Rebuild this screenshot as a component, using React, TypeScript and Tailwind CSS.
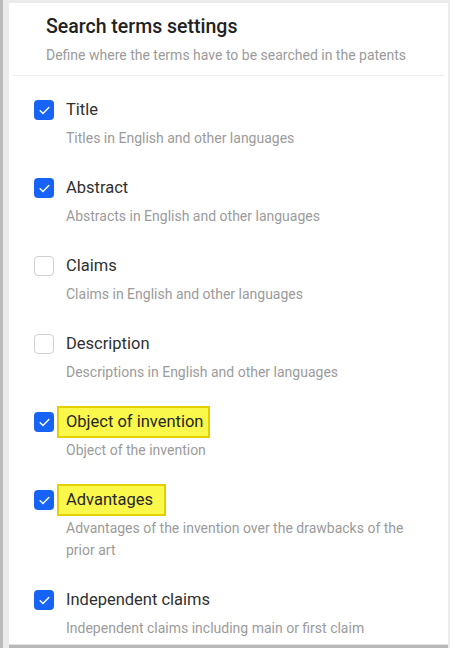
import React from "react";

type Term = {
  label: string;
  description: string;
  checked: boolean;
  highlight?: string;
};

const terms: Term[] = [
  { label: "Title", description: "Titles in English and other languages", checked: true },
  { label: "Abstract", description: "Abstracts in English and other languages", checked: true },
  { label: "Claims", description: "Claims in English and other languages", checked: false },
  { label: "Description", description: "Descriptions in English and other languages", checked: false },
  { label: "Object of invention", description: "Object of the invention", checked: true, highlight: "pr-[4px]" },
  {
    label: "Advantages",
    description: "Advantages of the invention over the drawbacks of the prior art",
    checked: true,
    highlight: "pr-[11px]",
  },
  { label: "Independent claims", description: "Independent claims including main or first claim", checked: true },
];

const Checkbox = ({ checked }: { checked: boolean }) =>
  checked ? (
    <span className="flex h-5 w-5 shrink-0 items-center justify-center rounded-[4px] bg-[#1763f6]">
      <svg width="13" height="13" viewBox="0 0 12 12" fill="none">
        <path d="M2 6.3l2.6 2.5L10 3.3" stroke="white" strokeWidth="1.3" strokeLinecap="round" strokeLinejoin="round" />
      </svg>
    </span>
  ) : (
    <span className="h-5 w-5 shrink-0 rounded-[4px] border border-[#d0d0d0] bg-white" />
  );

export default function App() {
  return (
    <div
      className="flex h-[648px] w-[450px] overflow-hidden border-l-[3px] border-l-[#bcbcbc] bg-[#ebebeb] pt-[3px] pr-[2px] pl-[6px]"
      style={{ fontFamily: "Roboto, 'Liberation Sans', sans-serif" }}
    >
      <div className="flex flex-1 flex-col bg-white">
        <div className="px-[37px] pt-[10px] pb-[10px]">
          <h1 className="text-[19.5px] font-medium leading-7 text-[#222]">Search terms settings</h1>
          <p className="mt-1 text-[14px] leading-5 text-[#9b9b9b]">
            Define where the terms have to be searched in the patents
          </p>
        </div>
        <div className="mx-[3px] h-px bg-[#ececec]" />

        <div className="flex flex-col gap-[27px] pl-[25px] pt-[22px]">
          {terms.map((t) => (
            <div key={t.label} className="flex gap-3">
              <div className="flex h-6 items-center">
                <Checkbox checked={t.checked} />
              </div>
              <div className="flex w-[344px] flex-col">
                {t.highlight ? (
                  <div
                    className={`-my-[4px] -ml-[9px] self-start border-2 border-[#e6cf00] bg-[#fbf84c] py-[2px] pl-[7px] text-[16.5px] leading-6 text-[#262626] ${t.highlight}`}
                  >
                    {t.label}
                  </div>
                ) : (
                  <div className="text-[16.5px] leading-6 text-[#303030]">{t.label}</div>
                )}
                <div className="mt-[5px] text-[14px] leading-[22px] text-[#9b9b9b]">{t.description}</div>
              </div>
            </div>
          ))}
        </div>
        <div className="flex-1" />
        <div className="h-px bg-[#e4e4e4]" />
        <div className="h-[3px] bg-[#b8b8b8]" />
      </div>
    </div>
  );
}
